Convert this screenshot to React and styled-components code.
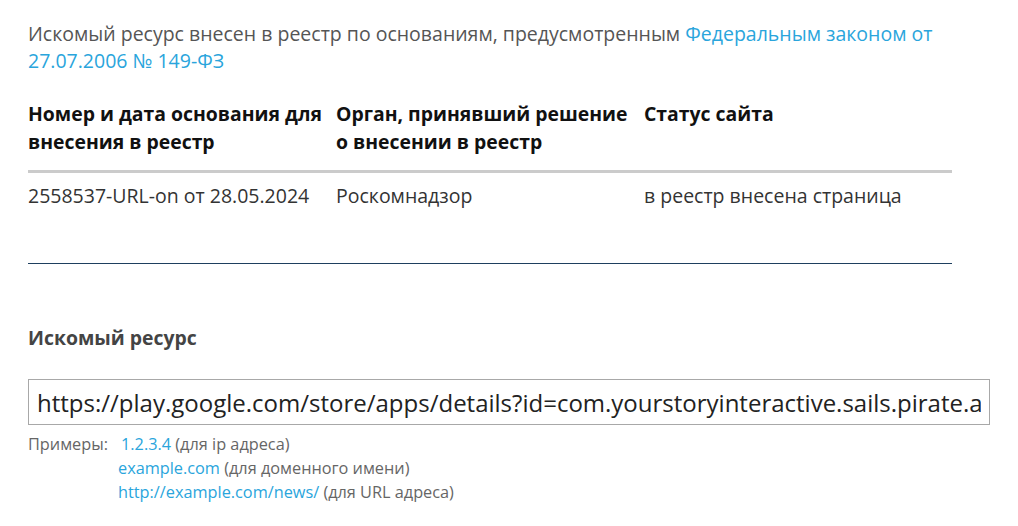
import React from 'react'
import styled, { createGlobalStyle } from 'styled-components'

const Global = createGlobalStyle`
  body {
    margin: 0;
    background: #fff;
    font-family: "Open Sans", "Noto Sans", sans-serif;
  }
`

const Page = styled.div`
  padding: 20px 28px 0 28px;
  color: #555;
`

const Intro = styled.p`
  margin: 0;
  font-size: 19.5px;
  line-height: 27px;
  color: #555;
  width: 930px;
`

const Link = styled.a`
  color: #2aa5dc;
  text-decoration: none;
`

const Table = styled.div`
  width: 924px;
  margin-top: 26px;
  border-bottom: 1px solid #1e3f5e;
`

const Row = styled.div`
  display: grid;
  grid-template-columns: 308px 308px 308px;
  padding: ${p => (p.head ? '0 0 14px' : '9px 0 54px')};
  border-bottom: ${p => (p.head ? '3px solid #cbcbcb' : 'none')};
`

const HeadCell = styled.div`
  font-size: 19.4px;
  line-height: 28px;
  font-weight: 700;
  color: #111;
  padding-right: 6px;
`

const Cell = styled.div`
  font-size: 19.5px;
  line-height: 27px;
  color: #333;
`

const Label = styled.h3`
  margin: 60px 0 0;
  font-size: 19.4px;
  line-height: 27px;
  font-weight: 700;
  color: #444;
`

const UrlInput = styled.input`
  display: block;
  box-sizing: border-box;
  width: 962px;
  height: 46px;
  margin-top: 28px;
  padding: 0 8px;
  border: 1px solid #a8a8a8;
  font-family: "Open Sans", "Noto Sans", sans-serif;
  font-size: 24px;
  color: #222;
  outline: none;
`

const Examples = styled.div`
  display: flex;
  margin-top: 7px;
  font-size: 16.3px;
  line-height: 24px;
  color: #666;
`

const ExLabel = styled.span`
  width: 90px;
  flex: none;
`

const ExList = styled.div`
  display: flex;
  flex-direction: column;
`

const ExItem = styled.div`
  padding-left: ${p => p.shift || 0}px;
`

export default function App() {
  return (
    <Page>
      <Global />
      <Intro>
        Искомый ресурс внесен в реестр по основаниям, предусмотренным{' '}
        <Link href="#">Федеральным законом от 27.07.2006 № 149-ФЗ</Link>
      </Intro>

      <Table>
        <Row head>
          <HeadCell>Номер и дата основания для внесения в реестр</HeadCell>
          <HeadCell>Орган, принявший решение о внесении в реестр</HeadCell>
          <HeadCell>Статус сайта</HeadCell>
        </Row>
        <Row>
          <Cell>2558537-URL-on от 28.05.2024</Cell>
          <Cell>Роскомнадзор</Cell>
          <Cell>в реестр внесена страница</Cell>
        </Row>
      </Table>

      <Label>Искомый ресурс</Label>
      <UrlInput
        readOnly
        value="https://play.google.com/store/apps/details?id=com.yourstoryinteractive.sails.pirate.adventure"
      />

      <Examples>
        <ExLabel>Примеры:</ExLabel>
        <ExList>
          <ExItem shift={3}><Link href="#">1.2.3.4</Link> (для ip адреса)</ExItem>
          <ExItem><Link href="#">example.com</Link> (для доменного имени)</ExItem>
          <ExItem><Link href="#">http://example.com/news/</Link> (для URL адреса)</ExItem>
        </ExList>
      </Examples>
    </Page>
  )
}
